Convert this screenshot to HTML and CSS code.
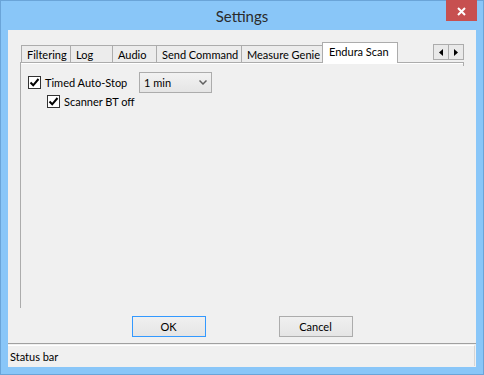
FILE: index.html
```html
<!DOCTYPE html>
<html lang="en">
<head>
    <meta charset="UTF-8">
    <title>Settings</title>
    <link rel="stylesheet" href="styles.css">
</head>
<body>
    <div class="window">
        <div class="titlebar">
            <span class="title">Settings</span>
            <button class="close-btn">
                <svg width="9" height="9" viewBox="0 0 9 9"><path d="M1 1 L8 8 M8 1 L1 8" stroke="#fff" stroke-width="2"/></svg>
            </button>
        </div>
        <div class="client">
            <div class="tabs">
                <div class="tab-strip">
                    <span class="tab tab-filtering">Filtering</span>
                    <span class="tab tab-log">Log</span>
                    <span class="tab tab-audio">Audio</span>
                    <span class="tab tab-send">Send Command</span>
                    <span class="tab tab-measure">Measure Genie</span>
                    <span class="tab tab-endura active">Endura Scan</span>
                    <div class="tab-scroll">
                        <span class="scroll-btn"><svg width="4" height="7" viewBox="0 0 4 7"><path d="M4 0 L0 3.5 L4 7 Z" fill="#000"/></svg></span>
                        <span class="scroll-btn"><svg width="4" height="7" viewBox="0 0 4 7"><path d="M0 0 L4 3.5 L0 7 Z" fill="#000"/></svg></span>
                    </div>
                </div>
                <div class="tab-panel">
                    <div class="row">
                        <label class="check check-wide">
                            <span class="box"><svg width="11" height="11" viewBox="0 0 11 11"><path d="M1.5 5.5 L4.2 8.3 L9.5 2" fill="none" stroke="#000" stroke-width="2"/></svg></span>
                            Timed Auto-Stop
                        </label>
                        <div class="select">
                            <span>1 min</span>
                            <svg width="8" height="5" viewBox="0 0 8 5"><path d="M0.5 0.5 L4 4 L7.5 0.5" fill="none" stroke="#606060" stroke-width="1.5"/></svg>
                        </div>
                    </div>
                    <div class="row sub">
                        <label class="check">
                            <span class="box"><svg width="11" height="11" viewBox="0 0 11 11"><path d="M1.5 5.5 L4.2 8.3 L9.5 2" fill="none" stroke="#000" stroke-width="2"/></svg></span>
                            Scanner BT off
                        </label>
                    </div>
                </div>
            </div>
            <div class="buttons">
                <button class="btn default">OK</button>
                <button class="btn">Cancel</button>
            </div>
            <div class="statusbar">
                <div class="status-pane">Status bar</div>
            </div>
        </div>
    </div>
</body>
</html>
```
FILE: styles.css
```css
body {
    margin: 0;
    font-family: Lato, "Noto Sans", sans-serif;
    font-size: 11px;
    color: #000;
}
.window {
    width: 484px;
    height: 375px;
    box-sizing: border-box;
    border: 1px solid #6aa4d8;
    background: #89c6f8;
    padding: 0 7px 7px;
    display: flex;
    flex-direction: column;
    position: relative;
}
.titlebar {
    height: 29px;
    display: flex;
    align-items: center;
    justify-content: center;
}
.title {
    font-size: 15px;
    color: #2b2b2b;
}
.close-btn {
    position: absolute;
    top: -1px;
    right: 6px;
    width: 31px;
    height: 21px;
    border: none;
    padding: 2px 0 0;
    background: #c75050;
    display: flex;
    align-items: center;
    justify-content: center;
}
.client {
    flex: 1;
    background: #f0f0f0;
    display: flex;
    flex-direction: column;
}
.tabs {
    flex: 1;
    margin: 12px 12px 0;
    display: flex;
    flex-direction: column;
}
.tab-strip {
    height: 20px;
    padding-left: 1px;
    display: flex;
    align-items: flex-end;
    position: relative;
    z-index: 1;
}
.tab {
    height: 17px;
    box-sizing: border-box;
    border: 1px solid #acacac;
    border-bottom: none;
    background: #ececec;
    padding: 2px 0 0 5px;
    line-height: 14px;
    margin-right: -1px;
    white-space: nowrap;
    overflow: hidden;
}
.tab-filtering { width: 50px; }
.tab-log { width: 43px; }
.tab-audio { width: 45px; }
.tab-send { width: 86px; }
.tab-measure { width: 82px; }
.tab-endura { width: 76px; }
.tab.active {
    height: 21px;
    margin-bottom: -1px;
    background: #fff;
    padding: 2px 0 0 6px;
}
.tab-scroll {
    margin-left: auto;
    align-self: flex-start;
    margin-top: 2px;
    display: flex;
}
.scroll-btn {
    width: 16px;
    height: 16px;
    box-sizing: border-box;
    border: 1px solid #acacac;
    background: #e9e9e9;
    margin-left: -1px;
    display: flex;
    align-items: center;
    justify-content: center;
}
.tab-panel {
    flex: 1;
    border-top: 1px solid #acacac;
    border-left: 1px solid #acacac;
    box-shadow: inset 0 1px 0 #fff;
    padding: 9px 0 0 7px;
    position: relative;
}
.tab-panel::after {
    content: "";
    position: absolute;
    top: -1px;
    right: 0;
    width: 1px;
    height: 4px;
    background: #acacac;
}
.row {
    display: flex;
    align-items: center;
}
.row.sub {
    margin-top: 1px;
    padding-left: 19px;
    height: 15px;
}
.check {
    display: flex;
    align-items: center;
    gap: 4px;
}
.check-wide {
    width: 111px;
}
.box {
    width: 13px;
    height: 13px;
    box-sizing: border-box;
    border: 1px solid #333;
    background: #fff;
    display: flex;
    align-items: center;
    justify-content: center;
}
.select {
    width: 73px;
    height: 21px;
    box-sizing: border-box;
    border: 1px solid #acacac;
    background: linear-gradient(#f2f2f2, #e5e5e5);
    padding: 0 4px 0 4px;
    display: flex;
    align-items: center;
    justify-content: space-between;
}
.buttons {
    display: flex;
    justify-content: center;
    gap: 73px;
    margin-top: 8px;
}
.btn {
    width: 74px;
    height: 21px;
    border: 1px solid #acacac;
    background: linear-gradient(#f0f0f0, #e5e5e5);
    font-family: inherit;
    font-size: 11px;
    padding: 0;
}
.btn.default {
    border-color: #3399ff;
}
.statusbar {
    margin-top: 6px;
    height: 24px;
    box-sizing: border-box;
    border-top: 1px solid #a0a0a0;
    padding: 1px 1px 1px 0;
}
.status-pane {
    height: 100%;
    box-sizing: border-box;
    border-top: 1px solid #fff;
    border-right: 1px solid #d5d5d5;
    padding-left: 2px;
    display: flex;
    align-items: center;
}
```
